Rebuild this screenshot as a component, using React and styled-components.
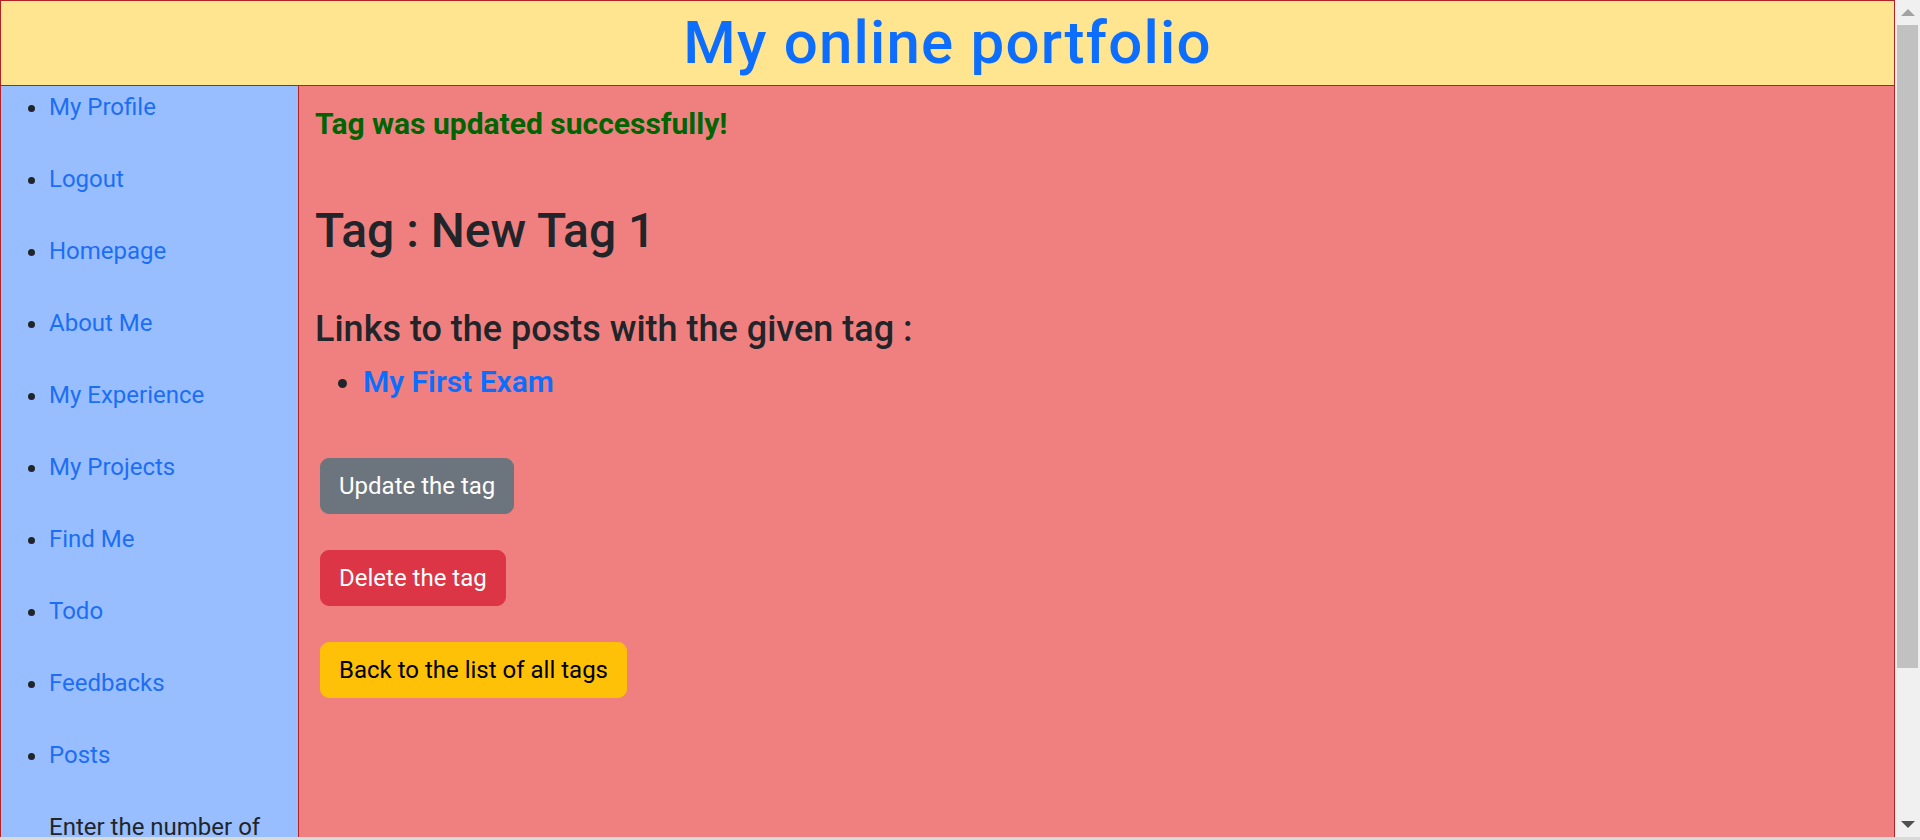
import React from 'react';
import styled, { createGlobalStyle } from 'styled-components';

const GlobalStyle = createGlobalStyle`
  body {
    margin: 0;
    font-family: "Segoe UI", Roboto, "Noto Sans", sans-serif;
    font-size: 24px;
    line-height: 1.5;
    color: #212529;
    background: #ffffff;
  }
`;

const Page = styled.div`
  margin-right: 25px;
`;

const Header = styled.header`
  background: #ffe590;
  border: 1px solid #b22222;
  height: 84px;
  display: flex;
  align-items: center;
  justify-content: center;
`;

const Title = styled.h1`
  margin: 0;
  font-size: 60px;
  font-weight: 500;
  line-height: 1.2;
  letter-spacing: 1.2px;
  color: #0d6efd;
`;

const Layout = styled.div`
  display: flex;
  align-items: stretch;
`;

const Sidebar = styled.nav`
  width: 297px;
  flex-shrink: 0;
  background: #99beff;
  border: 1px solid #b22222;
  border-top: none;
`;

const NavList = styled.ul`
  margin: 0;
  padding: 3px 0 0 48px;
`;

const NavItem = styled.li`
  line-height: 36px;
  margin-bottom: 36px;
  list-style: ${(p) => (p.$plain ? 'none' : 'disc')};
`;

const NavLink = styled.a`
  color: #1c6ef5;
  text-decoration: none;
`;

const SideText = styled.p`
  margin: 0 0 12px;
  color: #212529;
`;

const SideInput = styled.input`
  width: 180px;
  font: inherit;
  font-size: 22px;
  padding: 6px 10px;
  border: 1px solid #ced4da;
  border-radius: 9px;
  margin-bottom: 12px;
`;

const Main = styled.main`
  flex: 1;
  background: #f08080;
  border: 1px solid #b22222;
  border-top: none;
  border-left: none;
  padding: 20px 16px 60px;
`;

const Notice = styled.h5`
  margin: 0 0 60px;
  font-size: 30px;
  font-weight: 700;
  line-height: 1.2;
  color: #006400;
`;

const TagTitle = styled.h2`
  margin: 0 0 48px;
  font-size: 48px;
  font-weight: 500;
  line-height: 1.2;
`;

const SubTitle = styled.h4`
  margin: 0 0 13px;
  font-size: 36px;
  font-weight: 500;
  line-height: 1.2;
`;

const PostList = styled.ul`
  margin: 0 0 58px;
  padding-left: 48px;
`;

const PostItem = styled.li`
  font-size: 30px;
  line-height: 1.2;
`;

const PostLink = styled.a`
  color: #0d6efd;
  font-weight: 600;
  text-decoration: none;
`;

const ButtonStack = styled.div`
  display: flex;
  flex-direction: column;
  align-items: flex-start;
  gap: 36px;
  padding-left: 5px;
`;

const variants = {
  secondary: { bg: '#6c757d', fg: '#ffffff' },
  danger: { bg: '#dc3545', fg: '#ffffff' },
  warning: { bg: '#ffc107', fg: '#000000' },
};

const ActionButton = styled.button`
  font: inherit;
  font-size: 24px;
  line-height: 36px;
  padding: 9px 18px;
  border: 1px solid ${(p) => variants[p.$variant].bg};
  border-radius: 9px;
  background: ${(p) => variants[p.$variant].bg};
  color: ${(p) => variants[p.$variant].fg};
  cursor: pointer;
`;

/* browser chrome seen in the screenshot: vertical scrollbar + top edge of the horizontal one */
const ScrollTrack = styled.div`
  position: fixed;
  top: 0;
  right: 0;
  bottom: 3px;
  width: 25px;
  background: #f0f0f0;
  display: flex;
  flex-direction: column;
  align-items: center;
`;

const ScrollArrow = styled.div`
  height: 25px;
  flex-shrink: 0;
  display: flex;
  align-items: center;
  justify-content: center;

  &::after {
    content: "";
    border-left: 7px solid transparent;
    border-right: 7px solid transparent;
    ${(p) =>
      p.$down
        ? `border-top: 7px solid #505050;`
        : `border-bottom: 7px solid #a3a3a3;`}
  }
`;

const ScrollThumb = styled.div`
  width: 21px;
  height: 643px;
  background: #c1c1c1;
`;

const ScrollGap = styled.div`
  flex: 1;
`;

const HScrollEdge = styled.div`
  position: fixed;
  left: 0;
  right: 0;
  bottom: 0;
  height: 3px;
  background: #dadada;
`;

const navLinks = [
  'My Profile',
  'Logout',
  'Homepage',
  'About Me',
  'My Experience',
  'My Projects',
  'Find Me',
  'Todo',
  'Feedbacks',
  'Posts',
];

export default function App() {
  return (
    <>
      <GlobalStyle />
      <Page>
        <Header>
          <Title>My online portfolio</Title>
        </Header>
        <Layout>
          <Sidebar>
            <NavList>
              {navLinks.map((label) => (
                <NavItem key={label}>
                  <NavLink href="#">{label}</NavLink>
                </NavItem>
              ))}
              <NavItem $plain>
                <SideText>Enter the number of posts to show :</SideText>
                <SideInput type="number" defaultValue={3} />
                <ActionButton $variant="secondary">Show</ActionButton>
              </NavItem>
            </NavList>
          </Sidebar>
          <Main>
            <Notice>Tag was updated successfully!</Notice>
            <TagTitle>Tag : New Tag 1</TagTitle>
            <SubTitle>Links to the posts with the given tag :</SubTitle>
            <PostList>
              <PostItem>
                <PostLink href="#">My First Exam</PostLink>
              </PostItem>
            </PostList>
            <ButtonStack>
              <ActionButton $variant="secondary">Update the tag</ActionButton>
              <ActionButton $variant="danger">Delete the tag</ActionButton>
              <ActionButton $variant="warning">Back to the list of all tags</ActionButton>
            </ButtonStack>
          </Main>
        </Layout>
      </Page>
      <ScrollTrack>
        <ScrollArrow />
        <ScrollThumb />
        <ScrollGap />
        <ScrollArrow $down />
      </ScrollTrack>
      <HScrollEdge />
    </>
  );
}
